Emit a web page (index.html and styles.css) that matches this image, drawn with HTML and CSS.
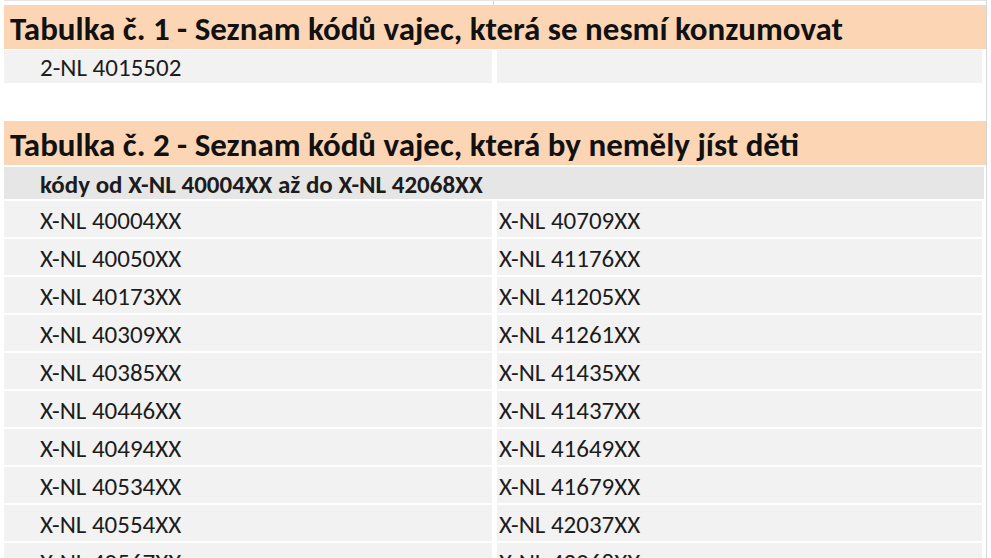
FILE: index.html
```html
<!DOCTYPE html>
<html lang="cs">
<head>
<meta charset="utf-8">
<title>Seznam kódů vajec</title>
<link rel="stylesheet" href="styles.css">
</head>
<body>
<div class="sheet">
  <div class="toprow"><div class="cell-blank"></div><div class="cell-blank"></div></div>
  <div class="title">Tabulka č. 1 - Seznam kódů vajec, která se nesmí konzumovat</div>
  <div class="row first"><div class="cell left">2-NL 4015502</div><div class="cell right"></div></div>
  <div class="blank"></div>
  <div class="title">Tabulka č. 2 - Seznam kódů vajec, která by neměly jíst děti</div>
  <div class="sub">kódy od X-NL 40004XX až do X-NL 42068XX</div>
  <div class="row"><div class="cell left">X-NL 40004XX</div><div class="cell right">X-NL 40709XX</div></div>
  <div class="row"><div class="cell left">X-NL 40050XX</div><div class="cell right">X-NL 41176XX</div></div>
  <div class="row"><div class="cell left">X-NL 40173XX</div><div class="cell right">X-NL 41205XX</div></div>
  <div class="row"><div class="cell left">X-NL 40309XX</div><div class="cell right">X-NL 41261XX</div></div>
  <div class="row"><div class="cell left">X-NL 40385XX</div><div class="cell right">X-NL 41435XX</div></div>
  <div class="row"><div class="cell left">X-NL 40446XX</div><div class="cell right">X-NL 41437XX</div></div>
  <div class="row"><div class="cell left">X-NL 40494XX</div><div class="cell right">X-NL 41649XX</div></div>
  <div class="row"><div class="cell left">X-NL 40534XX</div><div class="cell right">X-NL 41679XX</div></div>
  <div class="row"><div class="cell left">X-NL 40554XX</div><div class="cell right">X-NL 42037XX</div></div>
  <div class="row"><div class="cell left">X-NL 40567XX</div><div class="cell right">X-NL 42068XX</div></div>
</div>
</body>
</html>
```
FILE: styles.css
```css
html, body {
  margin: 0;
  padding: 0;
  height: 558px;
  overflow: hidden;
  background: #ffffff;
}
body {
  font-family: Carlito, Lato, "Open Sans", sans-serif;
  color: #1c1c1c;
}
.sheet {
  display: flex;
  flex-direction: column;
  margin-left: 4px;
  width: 982px;
  border-right: 1px solid #d6d6d6;
  min-height: 600px;
}
.toprow {
  display: grid;
  grid-template-columns: 490px 1fr;
  height: 5px;
  border-top: 1px solid #e4e4e4;
  box-sizing: border-box;
}
.cell-blank:first-child {
  border-right: 1px solid #d6d6d6;
}
.title {
  height: 44px;
  background: #fcd5b4;
  font-weight: bold;
  font-size: 33px;
  line-height: 48px;
  padding-left: 6px;
  color: #111;
  white-space: nowrap;
  overflow: hidden;
}
.row {
  display: grid;
  grid-template-columns: 488px 485px;
  column-gap: 5px;
  height: 36px;
  margin-top: 2px;
}
.row.first {
  margin-top: 1px;
  height: 33px;
}
.cell {
  background: #f2f2f2;
  font-size: 25px;
  line-height: 39px;
  white-space: nowrap;
  overflow: hidden;
}
.row.first .cell {
  box-sizing: border-box;
  line-height: 31px;
  padding-top: 2px;
}
.cell.left {
  padding-left: 36px;
}
.cell.right {
  padding-left: 2px;
}
.blank {
  height: 37px;
  margin-top: 1px;
}
.sub {
  height: 32px;
  margin-top: 2px;
  background: #e6e6e6;
  font-weight: bold;
  font-size: 25px;
  line-height: 35px;
  padding-left: 36px;
  margin-right: 2px;
  white-space: nowrap;
  overflow: hidden;
}
```
